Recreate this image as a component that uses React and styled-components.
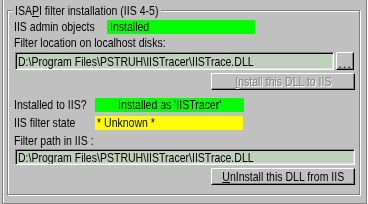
import React from "react";
import styled, { createGlobalStyle } from "styled-components";

const GlobalStyle = createGlobalStyle`
  html, body {
    margin: 0;
    padding: 0;
    background: #c0c0c0;
  }
  body {
    font-family: "Liberation Sans", Arial, sans-serif;
    font-size: 13px;
    color: #000;
  }
`;

// The dialog uses a narrow face; squeeze Liberation Sans to its width.
const Text = styled.span`
  display: inline-block;
  white-space: nowrap;
  transform: scaleX(0.81);
  transform-origin: ${(p) => (p.$center ? "center" : "left")} center;
`;

const Frame = styled.div`
  box-sizing: border-box;
  height: 204px;
  margin: 0 1px 0 2px;
  padding-top: 10px;
  border-left: 1px solid #808080;
  border-right: 1px solid #808080;
  border-bottom: 1px solid #808080;
  box-shadow: inset 1px 0 #fff, 1px 0 #fff, 0 1px #fff;
`;

const Group = styled.div`
  position: relative;
  box-sizing: border-box;
  width: 353px;
  height: 185px;
  margin-left: 4px;
  padding: 9px 4px 0 6px;
  border: 1px solid #808080;
  box-shadow: inset 1px 1px #fff, 1px 1px #fff;
  display: flex;
  flex-direction: column;
`;

const Legend = styled.span`
  position: absolute;
  top: -8px;
  left: 5px;
  width: 146px;
  padding: 0 0 0 2px;
  background: #c0c0c0;
  line-height: 15px;
  white-space: nowrap;
  overflow: hidden;
`;

const Row = styled.div`
  display: flex;
  align-items: center;
  height: 14px;
  margin-top: ${(p) => p.$top || 0}px;
`;

const Label = styled.div`
  width: ${(p) => (p.$width ? `${p.$width}px` : "auto")};
  flex: none;
  line-height: 14px;
  white-space: nowrap;
  margin-top: ${(p) => p.$top || 0}px;
`;

const Status = styled.div`
  box-sizing: border-box;
  width: ${(p) => p.$width}px;
  height: 14px;
  line-height: 14px;
  padding-left: ${(p) => (p.$center ? 0 : p.$pad || 2)}px;
  text-align: ${(p) => (p.$center ? "center" : "left")};
  background: ${(p) => p.$color};
  white-space: nowrap;
  overflow: hidden;
`;

const FieldRow = styled.div`
  display: flex;
  gap: 2px;
  margin-left: 1px;
  margin-top: ${(p) => p.$top || 0}px;
`;

const Field = styled.div`
  box-sizing: border-box;
  width: ${(p) => (p.$width ? `${p.$width}px` : "100%")};
  height: ${(p) => p.$height}px;
  padding-left: 2px;
  display: flex;
  align-items: center;
  background: #bfd0bc;
  border-top: 1px solid #808080;
  border-left: 1px solid #808080;
  border-right: 1px solid #fff;
  border-bottom: 1px solid #fff;
  box-shadow: inset 1px 1px #000, inset -1px -1px #dfdfdf;
  white-space: nowrap;
  overflow: hidden;
`;

const Button = styled.div`
  box-sizing: border-box;
  width: ${(p) => p.$width}px;
  height: ${(p) => p.$height}px;
  flex: none;
  align-self: ${(p) => (p.$right ? "flex-end" : "auto")};
  margin-top: ${(p) => p.$top || 0}px;
  display: flex;
  align-items: center;
  justify-content: center;
  background: #c0c0c0;
  border-top: 1px solid #fff;
  border-left: 1px solid #fff;
  border-right: 1px solid #000;
  border-bottom: 1px solid #000;
  box-shadow: inset -1px -1px #808080;
  white-space: nowrap;
  overflow: hidden;
  color: ${(p) => (p.$disabled ? "#808080" : "#000")};
  text-shadow: ${(p) => (p.$disabled ? "1px 1px #fff" : "none")};
  u {
    text-decoration-thickness: 1px;
  }
`;

const Dots = styled.span`
  padding-top: 4px;
  letter-spacing: 1px;
`;

const path = "D:\\Program Files\\PSTRUH\\IISTracer\\IISTrace.DLL";

export default function App() {
  return (
    <>
      <GlobalStyle />
      <Frame>
        <Group>
          <Legend>
            <Text>
              ISA<u>P</u>I filter installation (IIS 4-5)
            </Text>
          </Legend>
          <Row>
            <Label $width={93}>
              <Text>IIS admin objects</Text>
            </Label>
            <Status $width={148} $color="#00ff00" $pad={3}>
              <Text>Installed</Text>
            </Status>
          </Row>
          <Label $top={2}>
            <Text>Filter location on localhost disks:</Text>
          </Label>
          <FieldRow $top={2}>
            <Field $width={319} $height={18}>
              <Text>{path}</Text>
            </Field>
            <Button $width={18} $height={18}>
              <Dots>
                <u>.</u>..
              </Dots>
            </Button>
          </FieldRow>
          <Button $width={144} $height={17} $right $top={3} $disabled>
            <Text $center>
              <u>I</u>nstall this DLL to IIS
            </Text>
          </Button>
          <Row $top={8}>
            <Label $width={81}>
              <Text>Installed to IIS?</Text>
            </Label>
            <Status $width={149} $color="#00ff00" $center>
              <Text $center>Installed as 'IISTracer'</Text>
            </Status>
          </Row>
          <Row $top={4}>
            <Label $width={81}>
              <Text>IIS filter state</Text>
            </Label>
            <Status $width={148} $color="#ffff00">
              <Text>* Unknown *</Text>
            </Status>
          </Row>
          <Label $top={4}>
            <Text>Filter path in IIS :</Text>
          </Label>
          <FieldRow $top={1}>
            <Field $height={16}>
              <Text>{path}</Text>
            </Field>
          </FieldRow>
          <Button $width={144} $height={17} $right $top={3}>
            <Text $center>
              <u>U</u>nInstall this DLL from IIS
            </Text>
          </Button>
        </Group>
      </Frame>
    </>
  );
}
